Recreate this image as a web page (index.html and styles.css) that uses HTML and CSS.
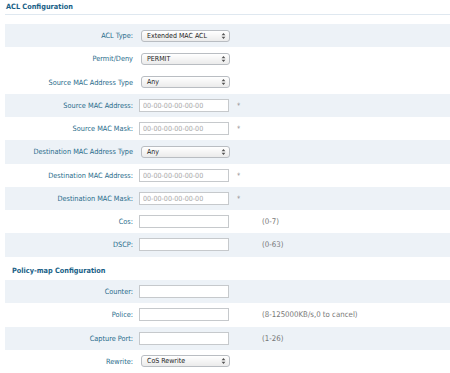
FILE: index.html
```html
<!DOCTYPE html>
<html>
<head>
<meta charset="utf-8">
<link rel="stylesheet" href="styles.css">
</head>
<body>
<div class="page">
  <div class="section-title">ACL Configuration</div>
  <div class="rows">
    <div class="row alt">
      <div class="label">ACL Type:</div>
      <div class="select"><span>Extended MAC ACL</span><svg class="arr" viewBox="0 0 5 8" width="5" height="8"><path d="M0.6 3.3 L2.5 0.9 L4.4 3.3 Z M0.6 4.7 L2.5 7.1 L4.4 4.7 Z" fill="#555"/></svg></div>
    </div>
    <div class="row">
      <div class="label">Permit/Deny</div>
      <div class="select"><span>PERMIT</span><svg class="arr" viewBox="0 0 5 8" width="5" height="8"><path d="M0.6 3.3 L2.5 0.9 L4.4 3.3 Z M0.6 4.7 L2.5 7.1 L4.4 4.7 Z" fill="#555"/></svg></div>
    </div>
    <div class="row">
      <div class="label">Source MAC Address Type</div>
      <div class="select"><span>Any</span><svg class="arr" viewBox="0 0 5 8" width="5" height="8"><path d="M0.6 3.3 L2.5 0.9 L4.4 3.3 Z M0.6 4.7 L2.5 7.1 L4.4 4.7 Z" fill="#555"/></svg></div>
    </div>
    <div class="row alt">
      <div class="label">Source MAC Address:</div>
      <input class="input" placeholder="00-00-00-00-00-00">
      <span class="req">*</span>
    </div>
    <div class="row">
      <div class="label">Source MAC Mask:</div>
      <input class="input" placeholder="00-00-00-00-00-00">
      <span class="req">*</span>
    </div>
    <div class="row alt">
      <div class="label">Destination MAC Address Type</div>
      <div class="select"><span>Any</span><svg class="arr" viewBox="0 0 5 8" width="5" height="8"><path d="M0.6 3.3 L2.5 0.9 L4.4 3.3 Z M0.6 4.7 L2.5 7.1 L4.4 4.7 Z" fill="#555"/></svg></div>
    </div>
    <div class="row">
      <div class="label">Destination MAC Address:</div>
      <input class="input" placeholder="00-00-00-00-00-00">
      <span class="req">*</span>
    </div>
    <div class="row alt">
      <div class="label">Destination MAC Mask:</div>
      <input class="input" placeholder="00-00-00-00-00-00">
      <span class="req">*</span>
    </div>
    <div class="row">
      <div class="label">Cos:</div>
      <input class="input">
      <span class="hint">(0-7)</span>
    </div>
    <div class="row alt">
      <div class="label">DSCP:</div>
      <input class="input">
      <span class="hint">(0-63)</span>
    </div>
  </div>
  <div class="section-title sub">Policy-map Configuration</div>
  <div class="rows">
    <div class="row alt">
      <div class="label">Counter:</div>
      <input class="input">
    </div>
    <div class="row">
      <div class="label">Police:</div>
      <input class="input">
      <span class="hint">(8-125000KB/s,0 to cancel)</span>
    </div>
    <div class="row alt">
      <div class="label">Capture Port:</div>
      <input class="input">
      <span class="hint">(1-26)</span>
    </div>
    <div class="row">
      <div class="label">Rewrite:</div>
      <div class="select"><span>CoS Rewrite</span><svg class="arr" viewBox="0 0 5 8" width="5" height="8"><path d="M0.6 3.3 L2.5 0.9 L4.4 3.3 Z M0.6 4.7 L2.5 7.1 L4.4 4.7 Z" fill="#555"/></svg></div>
    </div>
  </div>
</div>
</body>
</html>
```

FILE: styles.css
```css
html, body {
  margin: 0;
  padding: 0;
  background: #ffffff;
}
.page {
  padding-left: 5px;
  font-family: "DejaVu Sans Condensed", "DejaVu Sans", sans-serif;
  font-size: 7.3px;
  color: #286c8b;
  overflow: hidden;
  height: 373px;
}
.section-title {
  font-weight: bold;
  color: #1a5f87;
  height: 14px;
  line-height: 14px;
  padding-left: 1px;
  border-bottom: 1px solid #dfe8f0;
  margin-bottom: 9px;
}
.section-title.sub {
  border-bottom: none;
  height: 14.5px;
  padding-top: 9px;
  padding-left: 7px;
  line-height: 9px;
  margin-bottom: 0;
}
.rows {
  display: flex;
  flex-direction: column;
}
.row {
  height: 23.25px;
  display: grid;
  grid-template-columns: 128px 90px auto;
  column-gap: 7px;
  align-items: center;
}
.row.alt {
  background: #edf2f7;
}
.label {
  text-align: right;
  white-space: nowrap;
}
.input {
  box-sizing: border-box;
  width: 90px;
  height: 13px;
  margin: 0 0 0 -1px;
  padding: 0 3px;
  border: 1px solid #c6c9cc;
  background: #ffffff;
  font-family: inherit;
  font-size: 7.1px;
  color: #333;
  outline: none;
}
.input::placeholder {
  color: #a8a8a8;
}
.select {
  box-sizing: border-box;
  width: 89px;
  height: 12px;
  margin-left: 1px;
  padding: 0 3px 0 5px;
  border: 1px solid #b9bdc2;
  border-radius: 3px;
  background: linear-gradient(#ffffff, #ebebeb);
  display: flex;
  align-items: center;
  justify-content: space-between;
  color: #222;
  font-size: 7px;
}
.arr {
  display: block;
}
.req {
  color: #888;
}
.hint {
  color: #777;
  font-size: 7.8px;
  margin-left: 25px;
}
```
